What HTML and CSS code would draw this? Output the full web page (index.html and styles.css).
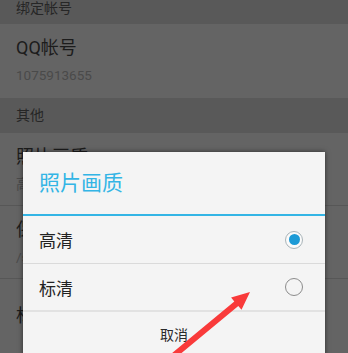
FILE: index.html
```html
<!DOCTYPE html>
<html lang="zh">
<head>
<meta charset="utf-8">
<link rel="stylesheet" href="styles.css">
</head>
<body>
<div class="screen">
  <div class="group-header first">绑定帐号</div>
  <div class="row two-line">
    <div class="title">QQ帐号</div>
    <div class="sub">1075913655</div>
  </div>
  <div class="group-header">其他</div>
  <div class="row two-line sep">
    <div class="title">照片画质</div>
    <div class="sub">高清</div>
  </div>
  <div class="row two-line sep">
    <div class="title">保存路径</div>
    <div class="sub">/sdcard/tencent/QQfile_recv</div>
  </div>
  <div class="row one-line">
    <div class="title">标签设置</div>
  </div>

  <div class="dialog">
    <div class="dialog-title">照片画质</div>
    <div class="dialog-rule"></div>
    <div class="option">
      <span class="option-label">高清</span>
      <span class="radio checked"></span>
    </div>
    <div class="option last">
      <span class="option-label">标清</span>
      <span class="radio"></span>
    </div>
    <div class="cancel">取消</div>
  </div>

  <svg class="arrow" width="348" height="353" viewBox="0 0 348 353">
    <polygon fill="#f93a3a" points="250,292 241.5,309.8 238.3,306 172.9,360.2 169,355.6 234.3,301.4 231.1,297.6"/>
  </svg>
</div>
</body>
</html>
```

FILE: styles.css
```css
html, body {
  margin: 0;
  padding: 0;
}
body {
  width: 348px;
  height: 353px;
  overflow: hidden;
  font-family: Roboto, "Noto Sans CJK SC", sans-serif;
  background: #646464;
}
.screen {
  position: relative;
  width: 348px;
  height: 353px;
  overflow: hidden;
  background: #646464;
}
.group-header {
  height: 35px;
  box-sizing: border-box;
  background: #595959;
  color: #262626;
  font-size: 14px;
  line-height: 35px;
  padding-left: 16px;
}
.group-header.first {
  height: 24px;
  line-height: 16px;
}
.row {
  background: #646464;
  padding-left: 16px;
  box-sizing: border-box;
}
.row.two-line {
  height: 74px;
  padding-top: 12px;
}
.row.two-line.sep {
  height: 73px;
  border-bottom: 1px solid #575757;
}
.row.one-line {
  height: 80px;
  padding-top: 25px;
}
.title {
  font-size: 18px;
  line-height: 24px;
  color: #1c1c1c;
}
.sub {
  font-size: 13.5px;
  line-height: 18px;
  margin-top: 6px;
  color: #4a4a4a;
}
.dialog {
  position: absolute;
  left: 23px;
  top: 152px;
  width: 302px;
  height: 230px;
  background: #f4f4f4;
  box-shadow: 0 0 5px rgba(0, 0, 0, 0.55);
}
.dialog-title {
  height: 62px;
  line-height: 62px;
  padding-left: 16px;
  font-size: 21px;
  color: #33b5e5;
}
.dialog-rule {
  height: 2px;
  background: #33b5e5;
}
.option {
  display: flex;
  align-items: center;
  justify-content: space-between;
  height: 47px;
  padding: 0 22px 0 16px;
  border-bottom: 1px solid #dadada;
}
.option.last {
  height: 46px;
  border-bottom: 2px solid #e2e2e2;
}
.option-label {
  font-size: 17px;
  color: #222;
}
.radio {
  width: 16px;
  height: 16px;
  border-radius: 50%;
  border: 1.2px solid #8c8c8c;
  box-sizing: content-box;
  position: relative;
}
.radio.checked {
  border-color: #a9b4b9;
  background: #fafafa;
}
.radio.checked::after {
  content: "";
  position: absolute;
  left: 2.5px;
  top: 2.5px;
  width: 11px;
  height: 11px;
  border-radius: 50%;
  background: #1c9ad6;
}
.cancel {
  height: 46px;
  line-height: 46px;
  text-align: center;
  font-size: 14px;
  color: #2a2a2a;
}
.arrow {
  position: absolute;
  left: 0;
  top: 0;
}
```
